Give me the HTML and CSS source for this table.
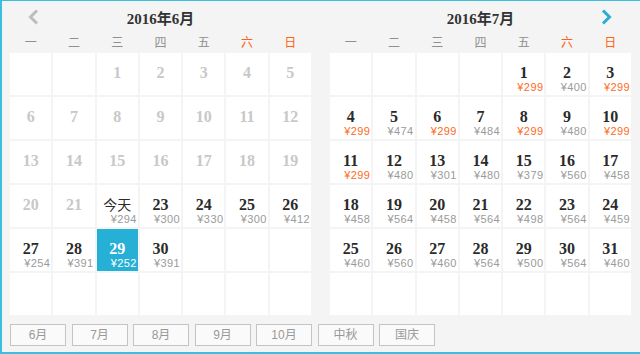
FILE: index.html
```html
<!DOCTYPE html>
<html lang="zh-CN">
<head>
<meta charset="utf-8">
<title>日历</title>
<link rel="stylesheet" href="styles.css">
</head>
<body>
<div class="picker">
  <div class="months">
    <div class="month">
      <div class="head">
        <svg class="arrow prev" viewBox="0 0 11 16"><polyline points="9,1.5 2.5,8 9,14.5" fill="none" stroke="#bdbdbd" stroke-width="3"/></svg>
        <div class="title">2016年6月</div>
        <span></span>
      </div>
      <div class="week"><span>一</span><span>二</span><span>三</span><span>四</span><span>五</span><span class="we">六</span><span class="we">日</span></div>
      <div class="days">
        <div class="cell"></div><div class="cell"></div>
        <div class="cell past"><div class="num">1</div></div>
        <div class="cell past"><div class="num">2</div></div>
        <div class="cell past"><div class="num">3</div></div>
        <div class="cell past"><div class="num">4</div></div>
        <div class="cell past"><div class="num">5</div></div>
        <div class="cell past"><div class="num">6</div></div>
        <div class="cell past"><div class="num">7</div></div>
        <div class="cell past"><div class="num">8</div></div>
        <div class="cell past"><div class="num">9</div></div>
        <div class="cell past"><div class="num">10</div></div>
        <div class="cell past"><div class="num">11</div></div>
        <div class="cell past"><div class="num">12</div></div>
        <div class="cell past"><div class="num">13</div></div>
        <div class="cell past"><div class="num">14</div></div>
        <div class="cell past"><div class="num">15</div></div>
        <div class="cell past"><div class="num">16</div></div>
        <div class="cell past"><div class="num">17</div></div>
        <div class="cell past"><div class="num">18</div></div>
        <div class="cell past"><div class="num">19</div></div>
        <div class="cell past"><div class="num">20</div></div>
        <div class="cell past"><div class="num">21</div></div>
        <div class="cell today"><div class="num">今天</div><div class="price">¥294</div></div>
        <div class="cell"><div class="num">23</div><div class="price">¥300</div></div>
        <div class="cell"><div class="num">24</div><div class="price">¥330</div></div>
        <div class="cell"><div class="num">25</div><div class="price">¥300</div></div>
        <div class="cell"><div class="num">26</div><div class="price">¥412</div></div>
        <div class="cell"><div class="num">27</div><div class="price">¥254</div></div>
        <div class="cell"><div class="num">28</div><div class="price">¥391</div></div>
        <div class="cell sel"><div class="num">29</div><div class="price">¥252</div></div>
        <div class="cell"><div class="num">30</div><div class="price">¥391</div></div>
        <div class="cell"></div><div class="cell"></div><div class="cell"></div>
        <div class="cell"></div><div class="cell"></div><div class="cell"></div><div class="cell"></div><div class="cell"></div><div class="cell"></div><div class="cell"></div>
      </div>
    </div>
    <div class="month">
      <div class="head">
        <span></span>
        <div class="title">2016年7月</div>
        <svg class="arrow next" viewBox="0 0 11 16"><polyline points="2,1.5 8.5,8 2,14.5" fill="none" stroke="#27aed4" stroke-width="3"/></svg>
      </div>
      <div class="week"><span>一</span><span>二</span><span>三</span><span>四</span><span>五</span><span class="we">六</span><span class="we">日</span></div>
      <div class="days">
        <div class="cell"></div><div class="cell"></div><div class="cell"></div><div class="cell"></div>
        <div class="cell low"><div class="num">1</div><div class="price">¥299</div></div>
        <div class="cell"><div class="num">2</div><div class="price">¥400</div></div>
        <div class="cell low"><div class="num">3</div><div class="price">¥299</div></div>
        <div class="cell low"><div class="num">4</div><div class="price">¥299</div></div>
        <div class="cell"><div class="num">5</div><div class="price">¥474</div></div>
        <div class="cell low"><div class="num">6</div><div class="price">¥299</div></div>
        <div class="cell"><div class="num">7</div><div class="price">¥484</div></div>
        <div class="cell low"><div class="num">8</div><div class="price">¥299</div></div>
        <div class="cell"><div class="num">9</div><div class="price">¥480</div></div>
        <div class="cell low"><div class="num">10</div><div class="price">¥299</div></div>
        <div class="cell low"><div class="num">11</div><div class="price">¥299</div></div>
        <div class="cell"><div class="num">12</div><div class="price">¥480</div></div>
        <div class="cell"><div class="num">13</div><div class="price">¥301</div></div>
        <div class="cell"><div class="num">14</div><div class="price">¥480</div></div>
        <div class="cell"><div class="num">15</div><div class="price">¥379</div></div>
        <div class="cell"><div class="num">16</div><div class="price">¥560</div></div>
        <div class="cell"><div class="num">17</div><div class="price">¥458</div></div>
        <div class="cell"><div class="num">18</div><div class="price">¥458</div></div>
        <div class="cell"><div class="num">19</div><div class="price">¥564</div></div>
        <div class="cell"><div class="num">20</div><div class="price">¥458</div></div>
        <div class="cell"><div class="num">21</div><div class="price">¥564</div></div>
        <div class="cell"><div class="num">22</div><div class="price">¥498</div></div>
        <div class="cell"><div class="num">23</div><div class="price">¥564</div></div>
        <div class="cell"><div class="num">24</div><div class="price">¥459</div></div>
        <div class="cell"><div class="num">25</div><div class="price">¥460</div></div>
        <div class="cell"><div class="num">26</div><div class="price">¥560</div></div>
        <div class="cell"><div class="num">27</div><div class="price">¥460</div></div>
        <div class="cell"><div class="num">28</div><div class="price">¥564</div></div>
        <div class="cell"><div class="num">29</div><div class="price">¥500</div></div>
        <div class="cell"><div class="num">30</div><div class="price">¥564</div></div>
        <div class="cell"><div class="num">31</div><div class="price">¥460</div></div>
        <div class="cell"></div><div class="cell"></div><div class="cell"></div><div class="cell"></div><div class="cell"></div><div class="cell"></div><div class="cell"></div>
      </div>
    </div>
  </div>
  <div class="tabs">
    <div class="tab">6月</div>
    <div class="tab">7月</div>
    <div class="tab">8月</div>
    <div class="tab">9月</div>
    <div class="tab">10月</div>
    <div class="tab">中秋</div>
    <div class="tab">国庆</div>
  </div>
</div>
</body>
</html>
```
FILE: styles.css
```css
html, body {
  margin: 0;
  padding: 0;
}
body {
  width: 640px;
  height: 354px;
  overflow: hidden;
  font-family: "Liberation Sans", "Noto Sans CJK SC", sans-serif;
}
.picker {
  box-sizing: border-box;
  width: 640px;
  height: 354px;
  background: #f4f4f4;
  border-left: 2px solid #3bbfdf;
  border-top: 1px solid #3bbfdf;
  border-bottom: 2px solid #3bbfdf;
  padding: 0 9px 0 8px;
}
.months {
  display: flex;
  gap: 19px;
}
.month {
  width: 301px;
}
.head {
  display: grid;
  grid-template-columns: 1fr auto 1fr;
  align-items: center;
  height: 32px;
}
.title {
  font: bold 15px "Liberation Serif", "Noto Sans CJK SC", serif;
  color: #333;
}
.arrow {
  width: 11px;
  height: 16px;
  display: block;
}
.prev {
  justify-self: start;
  margin-left: 18px;
}
.next {
  justify-self: end;
  margin-right: 19px;
}
.week {
  display: grid;
  grid-template-columns: repeat(7, 1fr);
  gap: 2px;
  height: 20px;
  line-height: 20px;
  text-align: center;
  font-size: 12px;
  color: #8f8f8f;
}
.week .we {
  color: #ff6310;
}
.days {
  display: grid;
  grid-template-columns: repeat(7, 1fr);
  grid-auto-rows: 42px;
  gap: 2px;
}
.cell {
  background: #fff;
  box-sizing: border-box;
  padding-top: 11px;
  display: flex;
  flex-direction: column;
  min-width: 0;
}
.num {
  font: bold 16px/17px "Liberation Serif", "Noto Sans CJK SC", serif;
  color: #2b2b2b;
  text-align: center;
}
.past .num {
  color: #c8c8c8;
}
.today .num {
  font: 14px/17px "Noto Sans CJK SC", sans-serif;
}
.price {
  font-size: 11px;
  line-height: 12px;
  letter-spacing: 0.4px;
  color: #9a9a9a;
  text-align: right;
  padding-right: 1px;
  white-space: nowrap;
}
.low .price {
  color: #ff6a1a;
}
.sel {
  background: #27b0d6;
}
.sel .num,
.sel .price {
  color: #fff;
}
.tabs {
  display: flex;
  gap: 5.5px;
  margin-top: 9px;
}
.tab {
  width: 56px;
  height: 22px;
  box-sizing: border-box;
  border: 1px solid #c4c4c4;
  background: #fafafa;
  color: #999;
  font-size: 12px;
  line-height: 20px;
  text-align: center;
}
```
